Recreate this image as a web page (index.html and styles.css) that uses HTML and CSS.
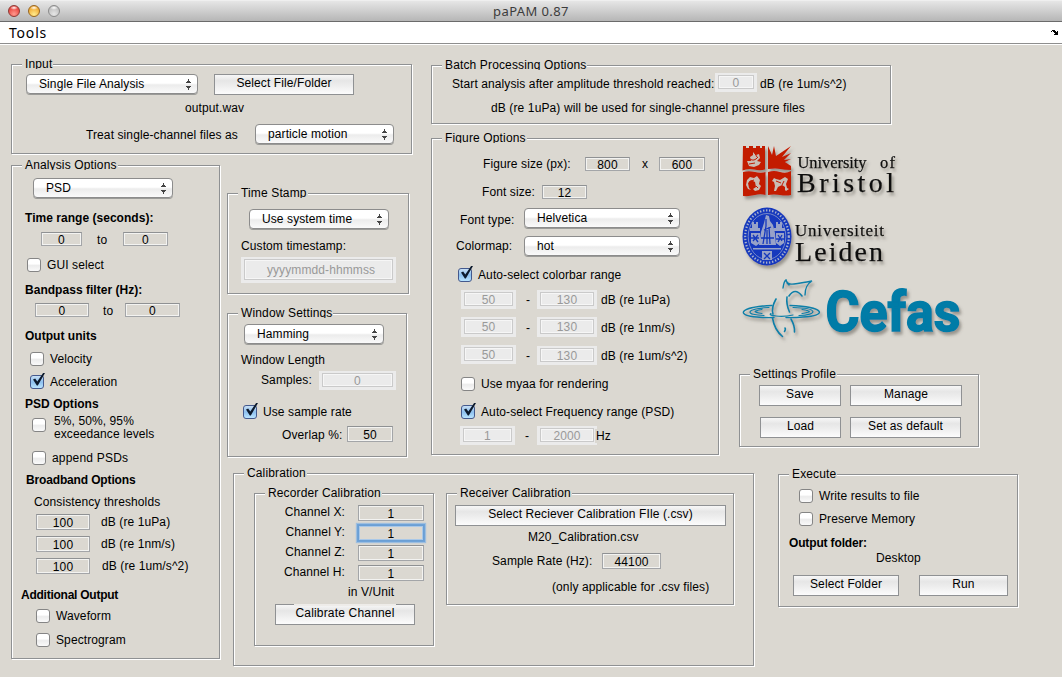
FILE: index.html
```html
<!DOCTYPE html>
<html lang="en">
<head>
<meta charset="utf-8">
<title>paPAM 0.87</title>
<link rel="stylesheet" href="styles.css">
</head>
<body>
<header class="titlebar">
  <div class="lights"><i class="light red"></i><i class="light amber"></i><i class="light grey"></i></div>
  <div class="title">paPAM 0.87</div>
</header>
<nav class="menubar">
  <span class="menu-item">Tools</span>
  <svg class="dock" width="8" height="6" viewBox="0 0 8 6" shape-rendering="crispEdges"><path d="M1 0h3v1h1v1h1V1h1v4H3V4h1V3H3V2H2V1H1zM0 1h1v1H0z" fill="#000"/></svg>
</nav>

<main class="workspace">
  <section class="panel input-panel">
    <h2 class="legend">Input</h2>
    <div class="row in-source"><div class="select">Single File Analysis</div><button class="btn">Select File/Folder</button></div>
    <div class="row in-file"><span>output.wav</span></div>
    <div class="row in-treat"><span class="low">Treat single-channel files as</span><div class="select">particle motion</div></div>
  </section>

  <section class="panel analysis-panel">
    <h2 class="legend">Analysis Options</h2>
    <div class="row an-mode"><div class="select">PSD</div></div>
    <div class="row an-time-title"><b>Time range (seconds):</b></div>
    <div class="row an-time"><div class="field">0</div><span class="low">to</span><div class="field">0</div></div>
    <div class="row an-gui"><i class="check"></i><span>GUI select</span></div>
    <div class="row an-band-title"><b>Bandpass filter (Hz):</b></div>
    <div class="row an-band"><div class="field">0</div><span class="low">to</span><div class="field">0</div></div>
    <div class="row an-units-title"><b>Output units</b></div>
    <div class="row an-unit"><i class="check"></i><span>Velocity</span></div>
    <div class="row an-unit"><i class="check on"></i><span>Acceleration</span></div>
    <div class="row an-psd-title"><b>PSD Options</b></div>
    <div class="row an-levels"><i class="check"></i><span class="two-line">5%, 50%, 95%<br>exceedance levels</span></div>
    <div class="row an-append"><i class="check"></i><span>append PSDs</span></div>
    <div class="row an-broad-title"><b>Broadband Options</b></div>
    <div class="row an-consist"><span>Consistency thresholds</span></div>
    <div class="row an-limit first"><div class="field tall">100</div><span>dB (re 1uPa)</span></div>
    <div class="row an-limit"><div class="field tall">100</div><span>dB (re 1nm/s)</span></div>
    <div class="row an-limit last"><div class="field tall">100</div><span>dB (re 1um/s^2)</span></div>
    <div class="row an-add-title"><b>Additional Output</b></div>
    <div class="row an-wave"><i class="check"></i><span>Waveform</span></div>
    <div class="row an-spec"><i class="check"></i><span>Spectrogram</span></div>
  </section>

  <div class="middle">
    <section class="panel time-panel">
      <h2 class="legend">Time Stamp</h2>
      <div class="row ts-mode"><div class="select">Use system time</div></div>
      <div class="row ts-label"><span>Custom timestamp:</span></div>
      <div class="row ts-value"><div class="off large"><div class="off-in">yyyymmdd-hhmmss</div></div></div>
    </section>
    <section class="panel window-panel">
      <h2 class="legend">Window Settings</h2>
      <div class="row wi-type"><div class="select">Hamming</div></div>
      <div class="row wi-label"><span>Window Length</span></div>
      <div class="row wi-samples"><span>Samples:</span><div class="off low"><div class="off-in">0</div></div></div>
      <div class="row wi-rate"><i class="check on"></i><span>Use sample rate</span></div>
      <div class="row wi-overlap"><span class="low">Overlap %:</span><div class="field tall">50</div></div>
    </section>
  </div>

  <div class="center">
    <section class="panel batch-panel">
      <h2 class="legend">Batch Processing Options</h2>
      <div class="row ba-start"><span>Start analysis after amplitude threshold reached:</span><div class="off up3"><div class="off-in">0</div></div><span>dB (re 1um/s^2)</span></div>
      <div class="row ba-note"><span>dB (re 1uPa) will be used for single-channel pressure files</span></div>
    </section>
    <div class="center-row">
      <section class="panel figure-panel">
        <h2 class="legend">Figure Options</h2>
        <div class="row fi-size"><span>Figure size (px):</span><div class="field">800</div><span>x</span><div class="field">600</div></div>
        <div class="row fi-font"><span>Font size:</span><div class="field">12</div></div>
        <div class="row fi-type"><span class="lower">Font type:</span><div class="select">Helvetica</div></div>
        <div class="row fi-map"><span>Colormap:</span><div class="select">hot</div></div>
        <div class="row fi-auto"><i class="check on"></i><span>Auto-select colorbar range</span></div>
        <div class="row fi-range first"><div class="off up1"><div class="off-in">50</div></div><span>-</span><div class="off up1"><div class="off-in">130</div></div><span>dB (re 1uPa)</span></div>
        <div class="row fi-range"><div class="off up2"><div class="off-in">50</div></div><span>-</span><div class="off up2"><div class="off-in">130</div></div><span>dB (re 1nm/s)</span></div>
        <div class="row fi-range"><div class="off up3"><div class="off-in">50</div></div><span>-</span><div class="off up1"><div class="off-in">130</div></div><span>dB (re 1um/s^2)</span></div>
        <div class="row fi-check"><i class="check"></i><span>Use myaa for rendering</span></div>
        <div class="row fi-check"><i class="check on"></i><span>Auto-select Frequency range (PSD)</span></div>
        <div class="row fi-freq"><div class="off up1"><div class="off-in">1</div></div><span>-</span><div class="off up1"><div class="off-in">2000</div></div><span class="hz">Hz</span></div>
      </section>
      <div class="side">
        <svg class="logos" width="240" height="236" viewBox="739 138 240 236">
          <defs>
            <filter id="sh" x="-10%" y="-10%" width="125%" height="130%"><feDropShadow dx="2" dy="3" stdDeviation="1.5" flood-color="#55524c" flood-opacity=".5"/></filter>
          </defs>
          <g filter="url(#sh)">
            <g fill="#c31b02">
              <path d="M743 146h3v2h3v-2h4v2h3v-2h4v2h2v-2h3v23.500q-5 1.500-11 0t-11.500 1z"/>
              <path d="M768 169V146l4 9 2-9 2 10 15-10-9 11 9-4-7 7 7-1-6 3 6 4v4q-7 0-11-1t-12 0z"/>
              <path d="M743 172q6-1.500 12 0t10.500 0V195q-5-1.500-10.500 0t-12 1z"/>
              <path d="M768 172q6-2 12 0t11-1v24q-5 1-11 0t-12 0z"/>
            </g>
            <g fill="#c9bdb4">
              <path d="M747 161l4 0-1-4 3-2v-3l3 3 3-1 1 4-3 3 4 1-2 3-5 2-5-1z"/>
              <path d="M747 180l3-3 4 1 3-2 3 4-1 4 2 2-2 4-4 1-2-2 3-2-1-5-4-2-3 3 1 5 2 2-3-1-2-4z"/>
              <path d="M772 181l2-3 2 1 4 1 5-3 3 2-2 5 1 4 2 1-3 2-1-1 0-3-3-2-4 2-2 4-2 0 1-5-1-4z"/>
            </g>
            <g stroke="#c31b02" fill="none" stroke-width="1"><path d="M750 159q4 3 8-2M749 164l6-1M754 152l3 5M749 182l5-2M756 186l2 2M776 181l5 2M784 181l-2 4"/></g>
            <g font-family="'Liberation Serif', serif" fill="#111" stroke="#111" stroke-width=".25">
              <text x="797.500" y="167.500" font-size="16.500" textLength="69">University</text>
              <text x="880" y="167.500" font-size="16.500" textLength="15">of</text>
              <text x="797" y="191.500" font-size="28" textLength="97">Bristol</text>
              <text x="795" y="235.500" font-size="17" textLength="89">Universiteit</text>
              <text x="795" y="260.500" font-size="28" textLength="88">Leiden</text>
            </g>
            <ellipse cx="767" cy="236.500" rx="24.500" ry="29" fill="#1438bd"/>
            <ellipse cx="767" cy="236.500" rx="21.800" ry="26.200" fill="none" stroke="#a9b0cc" stroke-width="2.200" stroke-dasharray="1.400 1.700"/>
            <ellipse cx="767" cy="236.500" rx="18.800" ry="23" fill="none" stroke="#8f9bca" stroke-width=".8"/>
            <g fill="#98a2c8">
              <path d="M766 215l3 1 1 5 3 4 2 8 1 12h-17l2-13 3-9z"/>
              <path d="M750 228h2v-6h2v2h2v-2h2v6h2v3h-10zM774 228h2v-6h2v2h2v-2h2v6h3v3h-11z"/>
              <path d="M751 233h9v10l-4 3-5-3zM776 233h8v10l-4 3-4-3z"/>
              <path d="M753 248h28v1.500h-28zM762 251h10v9h-10z"/>
            </g>
            <g stroke="#1438bd" fill="none" stroke-width="1.300">
              <path d="M766 219v7l-3 18M769 227l1 17M764 230l7-3M767 230v14M753 235l5 7M758 235l-5 6M778 235l4 6M782 235l-4 7M764 253l3 3 3-3M764 259l3-3 3 3M751 238h8M776 239h8M761 238h13"/>
            </g>
            <g fill="none" stroke="#0a7fa8" stroke-linecap="round">
              <path d="M772 305.500C738 307 736 315.500 757 317q8 .8 17 .5M790 305.500C825 307 828 315.500 803 317q-10 1-17 .5" stroke-width="1.400"/>
              <path d="M769 307.500C744 309 745 315 764 315.500M793 307.500C819 308 818 315 799 315.500" stroke-width="1.200"/>
              <path d="M762 309.500q-14 2 0 4M802 309.500q14 2 0 4M758 310.500q-5 1 0 2M807 310.500q5 1 0 2" stroke-width="1.200"/>
              <path d="M771 313.500q-3 1.500 5 2.500t17-1" stroke-width="1.200"/>
              <path d="M783 288q1-7 3-8 1 5 8 4t18-3q-7 4-7 14M787 283l2 2" stroke-width="1.400"/>
              <path d="M789 296q6-9 13 0" stroke-width="1.600"/>
              <path d="M776 299q-5 9-3 15M772.500 318q2 12 10 18.500M787 297q-1 7 2.500 15M791 319q4 7 3.500 13M785 328q1 1-.5 3.500" stroke-width="1.600"/>
            </g>
            <text x="825.500" y="331" font-family="Roboto, sans-serif" font-weight="700" font-size="55" fill="#007ba7" stroke="#007ba7" stroke-width="1.600" textLength="135" lengthAdjust="spacingAndGlyphs">Cefas</text>
          </g>
        </svg>
        <section class="panel settings-panel">
          <h2 class="legend">Settings Profile</h2>
          <div class="row se-one"><button class="btn">Save</button><button class="btn">Manage</button></div>
          <div class="row se-two"><button class="btn">Load</button><button class="btn">Set as default</button></div>
        </section>
      </div>
    </div>
  </div>

  <div class="bottom">
    <section class="panel calibration-panel">
      <h2 class="legend">Calibration</h2>
      <div class="calibration-body">
        <section class="panel recorder-panel">
          <h2 class="legend">Recorder Calibration</h2>
          <div class="row re-channel first"><span class="high">Channel X:</span><div class="field tall">1</div></div>
          <div class="row re-channel"><span class="high">Channel Y:</span><div class="field tall focus">1</div></div>
          <div class="row re-channel"><span class="high">Channel Z:</span><div class="field tall">1</div></div>
          <div class="row re-channel"><span class="high">Channel H:</span><div class="field tall">1</div></div>
          <div class="row re-unit"><span>in V/Unit</span></div>
          <div class="row re-button"><button class="btn"><span class="cover">Calibrate Channel</span></button></div>
        </section>
        <section class="panel receiver-panel">
          <h2 class="legend">Receiver Calibration</h2>
          <div class="row rc-button"><button class="btn">Select Reciever Calibration FIle (.csv)</button></div>
          <div class="row rc-file"><span>M20_Calibration.csv</span></div>
          <div class="row rc-rate"><span>Sample Rate (Hz):</span><div class="field tall">44100</div></div>
          <div class="row rc-note"><span>(only applicable for .csv files)</span></div>
        </section>
      </div>
    </section>
    <section class="panel execute-panel">
      <h2 class="legend">Execute</h2>
      <div class="row ex-write"><i class="check"></i><span>Write results to file</span></div>
      <div class="row ex-memory"><i class="check"></i><span>Preserve Memory</span></div>
      <div class="row ex-title"><b>Output folder:</b></div>
      <div class="row ex-folder"><span>Desktop</span></div>
      <div class="row ex-buttons"><button class="btn">Select Folder</button><button class="btn">Run</button></div>
    </section>
  </div>
</main>
</body>
</html>
```
FILE: styles.css
```css
* { box-sizing: border-box; }
body {
  margin: 0;
  width: 1062px;
  height: 677px;
  overflow: hidden;
  background: #dbd8d1;
  color: #000;
  font: 12px/14px "Liberation Sans", Arial, sans-serif;
  letter-spacing: .1px;
  white-space: nowrap;
}
b { letter-spacing: .03px; }

/* Window chrome */
.titlebar {
  display: grid;
  grid-template-columns: 80px 1fr 80px;
  align-items: center;
  height: 22px;
  border-top: 1px solid #efefef;
  border-bottom: 1px solid #6b6b6b;
  background: linear-gradient(#e6e6e6, #b6b6b6);
}
.lights { display: flex; gap: 8px; padding-left: 8px; }
.light { width: 12px; height: 12px; border-radius: 50%; border: 1px solid #777; }
.red { border-color: #8d3934; background: radial-gradient(ellipse 4px 2px at 50% 18%, #fff, transparent), radial-gradient(circle at 50% 80%, #ff9a8e, #e9453f 70%); }
.amber { border-color: #97651f; background: radial-gradient(ellipse 4px 2px at 50% 18%, #fff, transparent), radial-gradient(circle at 50% 85%, #ffec8e, #f0a62e 75%); }
.grey { border-color: #8a8a8a; background: radial-gradient(ellipse 4px 2px at 50% 18%, #fff, transparent), radial-gradient(circle at 50% 80%, #e6e6e6, #bdbdbd 75%); }
.title { text-align: center; font: 13px/18px "Noto Sans", sans-serif; color: #3c3c3c; letter-spacing: .4px; }
.menubar {
  display: flex;
  align-items: center;
  justify-content: space-between;
  height: 23px;
  padding: 0 3px 1px 9px;
  background: #fff;
  border-bottom: 1px solid #fff;
  box-shadow: inset 0 -1px #8e8e8e;
}
.menu-item { font: 14px/20px "Noto Sans", sans-serif; letter-spacing: .8px; }

/* Layout */
.workspace {
  display: grid;
  grid-template-columns: 216px 204px 1fr;
  grid-template-rows: 120px 308px 204px;
  padding-left: 11px;
}
.input-panel { grid-area: 1 / 1 / 2 / 3; width: 401px; height: 90px; margin-top: 19px; }
.analysis-panel { grid-area: 2 / 1 / 4 / 2; width: 209px; height: 494px; }
.middle { grid-area: 2 / 2; padding-top: 28px; display: flex; flex-direction: column; gap: 19px; }
.time-panel { width: 182px; height: 101px; }
.window-panel { width: 180px; height: 144px; }
.center { grid-area: 1 / 3 / 3 / 4; padding-top: 20px; display: flex; flex-direction: column; gap: 14px; }
.batch-panel { width: 460px; height: 59px; }
.center-row { display: flex; gap: 20px; }
.figure-panel { width: 288px; height: 317px; }
.side { display: flex; flex-direction: column; }
.logos { display: block; overflow: visible; letter-spacing: 0; }
.settings-panel { width: 240px; height: 73px; }
.bottom { grid-area: 3 / 2 / 4 / 4; padding-left: 6px; display: flex; gap: 24px; align-items: flex-start; }
.calibration-panel { width: 521px; height: 193px; }
.calibration-body { display: flex; gap: 12px; align-items: flex-start; padding: 15px 0 0 20px; }
.recorder-panel { width: 180px; height: 153px; }
.receiver-panel { width: 288px; height: 112px; }
.execute-panel { width: 240px; height: 133px; margin-top: 1px; }

/* Etched group box */
.panel {
  display: flex;
  flex-direction: column;
  border: 1px solid #8f9193;
  box-shadow: inset 1px 1px #fff, 1px 1px #fff;
}
.legend {
  align-self: flex-start;
  flex: none;
  height: 12px;
  margin: -8px 0 0 10px;
  padding: 0 1px 0 3px;
  overflow: hidden;
  background: #dbd8d1;
  font: inherit;
  letter-spacing: .14px;
}
.row {
  display: grid;
  flex: none;
  grid-template-rows: 14px;
  align-items: center;
  justify-content: start;
}
.low { margin-top: 2px; }
.lower { margin-top: 4px; }
.high { margin-bottom: 2px; }
.two-line { line-height: 13px; margin-top: 5px; }

/* Controls */
.select {
  height: 20px;
  padding: 0 24px 0 12px;
  border: 1px solid #8c8c8c;
  border-radius: 4px;
  box-shadow: 0 1px #9b9b98;
  line-height: 18px;
  background:
    conic-gradient(from 149deg at 50% 0, #444 62deg, transparent 0) right 6px top 4px / 5px 4px no-repeat,
    conic-gradient(from -31deg at 50% 100%, #444 62deg, transparent 0) right 6px top 11px / 5px 4px no-repeat,
    linear-gradient(#fff 45%, #ececec 55%, #fafafa);
}
.btn {
  height: 21px;
  margin: 0 0 -1px;
  padding: 0 0 3px;
  border: 1px solid #8f9193;
  background: linear-gradient(#f7f7f7, #e6e6e6 30%, #ededed 55%, #fcfcfc);
  color: #000;
  font: 12px/16px "Liberation Sans", Arial, sans-serif;
  letter-spacing: .1px;
  text-align: center;
}
.cover { display: inline-block; height: 16px; margin-top: -2px; padding: 1px 1px 0; background: linear-gradient(#eeece9 2px, transparent 0); }
.field {
  height: 14px;
  border: 1px solid #a3a5a8;
  border-top-color: #8f9193;
  box-shadow: inset 0 0 0 1px #f3f3f1;
  text-align: center;
  line-height: 14px;
}
.field.tall { height: 16px; line-height: 16px; }
.field.focus { border-color: #6b9fd4; box-shadow: inset 0 0 0 1px #a9c8e8, 0 0 0 1px #6fa3d8, 0 0 1px 2px #9dbedf; }
.off { height: 19px; padding: 2px 3px 3px; background: #ebebeb; color: #999; }
.off-in { height: 100%; border: 1px solid #cacaca; box-shadow: inset 0 0 0 1px #f6f6f6; text-align: center; line-height: 14px; }
.off.large { height: 26px; }
.off.large .off-in { line-height: 20px; padding-left: 5px; }
.up1 { margin-bottom: 1px; }
.up2 { height: 20px; margin-bottom: 2px; }
.up3 { margin-bottom: 3px; }
.check {
  width: 14px;
  height: 14px;
  border: 1px solid #858585;
  border-radius: 3px;
  background: linear-gradient(#fff 40%, #ececec 55%, #fafafa);
}
.check.on {
  position: relative;
  border-color: #44598d;
  background: linear-gradient(#c9e0f5, #8dc0ef 50%, #b9e4ff);
}
.check.on::after {
  content: "";
  position: absolute;
  left: 2px;
  top: -3px;
  width: 12px;
  height: 13px;
  background: #0c1a2d;
  clip-path: polygon(0 50%, 18% 43%, 36% 66%, 84% 0, 100% 0, 40% 96%, 32% 96%);
}

/* Input */
.in-source { margin-top: 8px; padding-left: 14px; grid-template-columns: 172px 140px; column-gap: 16px; }
.in-file { margin-top: 10px; padding-left: 173px; }
.in-treat { margin-top: 12px; padding-left: 74px; grid-template-columns: 169px 139px; }

/* Analysis options */
.an-mode { margin-top: 11px; padding-left: 21px; grid-template-columns: 140px; }
.an-time-title { margin-top: 16px; padding-left: 13px; }
.an-time { margin-top: 7px; padding-left: 29px; grid-template-columns: 56px 26px 45px; }
.an-time .field:first-child { width: 41px; }
.an-gui { margin-top: 12px; padding-left: 15px; grid-template-columns: 20px auto; }
.an-band-title { margin-top: 11px; padding-left: 13px; }
.an-band { margin-top: 6px; padding-left: 23px; grid-template-columns: 68px 22px 55px; }
.an-band .field:first-child { width: 54px; }
.an-units-title { margin-top: 12px; padding-left: 13px; }
.an-unit { margin-top: 9px; padding-left: 18px; grid-template-columns: 20px auto; }
.an-psd-title { margin-top: 8px; padding-left: 13px; }
.an-levels { margin-top: 7px; padding-left: 20px; grid-template-columns: 22px auto; }
.an-append { margin-top: 19px; padding-left: 20px; grid-template-columns: 20px auto; letter-spacing: .2px; }
.an-broad-title { margin-top: 8px; padding-left: 14px; }
.an-broad-title b { letter-spacing: -.15px; }
.an-consist { margin-top: 8px; padding-left: 22px; }
.an-limit { margin-top: 8px; padding-left: 24px; grid-template-columns: 54px auto; column-gap: 11px; }
.an-limit.first { margin-top: 6px; }
.an-limit.last { column-gap: 12px; }
.an-add-title { margin-top: 15px; padding-left: 9px; }
.an-add-title b { letter-spacing: -.25px; }
.an-wave { margin-top: 7px; padding-left: 24px; grid-template-columns: 20px auto; }
.an-spec { margin-top: 10px; padding-left: 24px; grid-template-columns: 20px auto; }

/* Time stamp */
.ts-mode { margin-top: 14px; padding-left: 21px; grid-template-columns: 140px; }
.ts-label { margin-top: 13px; padding-left: 13px; }
.ts-value { margin-top: 10px; padding-left: 13px; grid-template-columns: 155px; }

/* Window settings */
.wi-type { margin-top: 9px; padding-left: 16px; grid-template-columns: 140px; }
.wi-label { margin-top: 12px; padding-left: 13px; }
.wi-samples { margin-top: 6px; padding-left: 33px; grid-template-columns: 58px 77px; }
.wi-samples .off { margin-top: 1px; }
.wi-rate { margin-top: 18px; padding-left: 15px; grid-template-columns: 20px auto; }
.wi-overlap { margin-top: 8px; padding-left: 54px; grid-template-columns: 65px 46px; }

/* Batch */
.ba-start { margin-top: 7px; padding-left: 20px; grid-template-columns: 263px 42px auto; }
.ba-start span:last-child { padding-left: 3px; }
.ba-note { margin-top: 10px; padding-left: 59px; letter-spacing: .12px; }

/* Figure options */
.fi-size { margin-top: 14px; padding-left: 51px; grid-template-columns: 102px 57px 17px 46px; }
.fi-size .field:nth-child(2) { width: 45px; }
.fi-font { margin-top: 14px; padding-left: 50px; grid-template-columns: 60px 45px; }
.fi-type { margin-top: 12px; padding-left: 28px; grid-template-columns: 64px 156px; }
.fi-map { margin-top: 14px; padding-left: 24px; grid-template-columns: 68px 156px; }
.fi-auto { margin-top: 15px; padding-left: 26px; grid-template-columns: 20px auto; }
.fi-range { margin-top: 14px; padding-left: 29px; grid-template-columns: 55px 21px 60px auto; }
.fi-range.first { margin-top: 11px; }
.fi-range span, .fi-freq span { padding-left: 10px; }
.fi-range span:last-child { padding-left: 4px; }
.fi-check { margin-top: 14px; padding-left: 29px; grid-template-columns: 20px auto; }
.fi-freq { margin-top: 10px; padding-left: 28px; grid-template-columns: 55px 22px 60px auto; }
.fi-freq .hz { margin-left: -2px; padding-left: 1px; background: #dbd8d1; }

/* Settings profile */
.se-one { margin-top: 9px; padding-left: 19px; grid-template-columns: 82px 112px; column-gap: 9px; }
.se-two { margin-top: 18px; padding-left: 20px; grid-template-columns: 81px 111px; column-gap: 9px; }

/* Calibration */
.re-channel { margin-top: 6px; padding-left: 20px; grid-template-columns: 70px 66px; column-gap: 13px; text-align: right; }
.re-channel.first { margin-top: 8px; }
.re-unit { margin-top: 5px; padding-left: 93px; }
.re-button { margin-top: 8px; padding-left: 20px; grid-template-columns: 140px; }
.re-button .btn { letter-spacing: .18px; }
.rc-button { margin-top: 10px; padding-left: 8px; grid-template-columns: 271px; }
.rc-file { margin-top: 8px; padding-left: 81px; }
.rc-rate { margin-top: 10px; padding-left: 45px; grid-template-columns: 110px 59px; }
.rc-note { margin-top: 12px; padding-left: 105px; }

/* Execute */
.ex-write { margin-top: 10px; padding-left: 20px; grid-template-columns: 20px auto; }
.ex-memory { margin-top: 9px; padding-left: 20px; grid-template-columns: 20px auto; }
.ex-title { margin-top: 10px; padding-left: 10px; }
.ex-title b { letter-spacing: -.15px; }
.ex-folder { margin-top: 1px; padding-left: 97px; }
.ex-buttons { margin-top: 13px; padding-left: 14px; grid-template-columns: 106px 89px; column-gap: 20px; }
```
